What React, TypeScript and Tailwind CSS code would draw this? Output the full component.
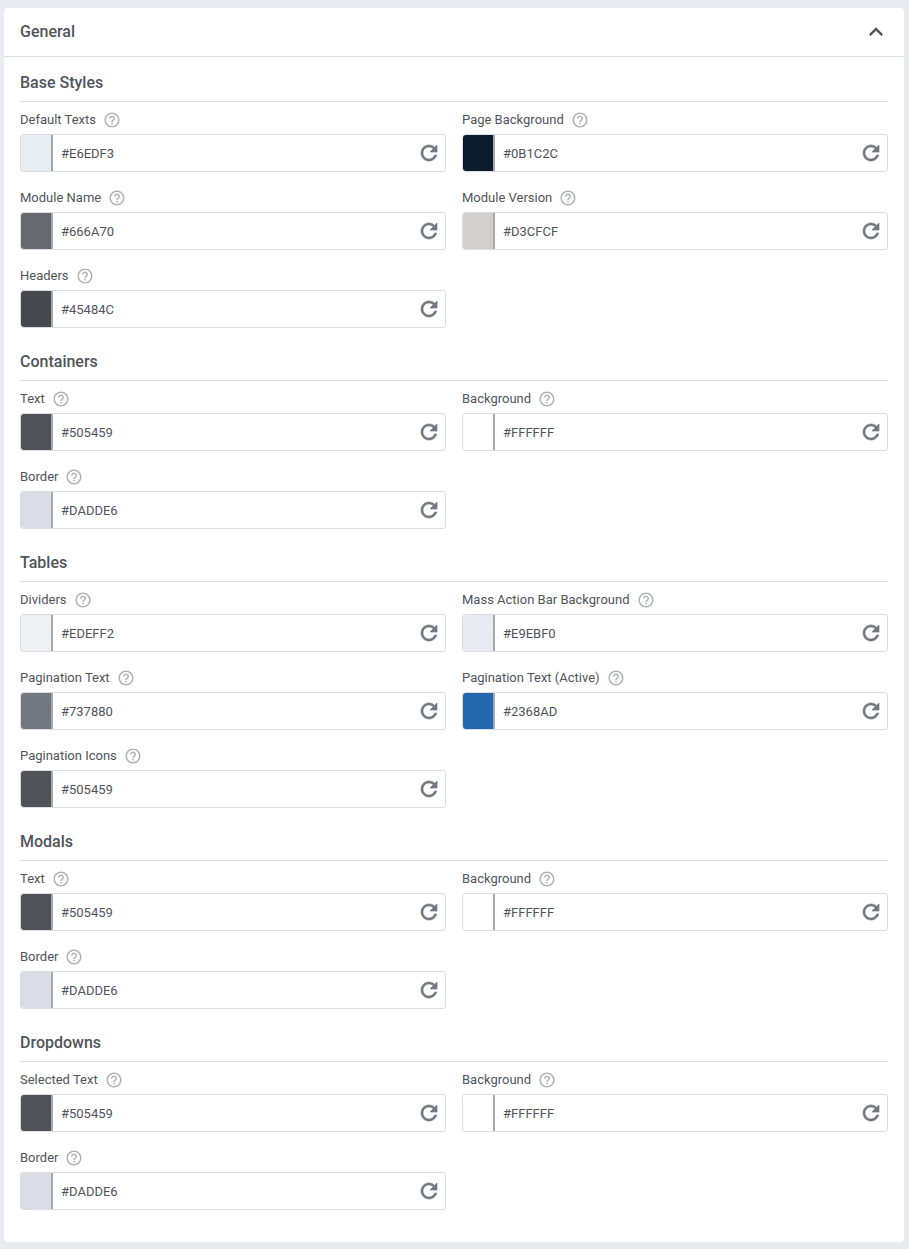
import React from 'react';
import { MdExpandLess, MdHelpOutline } from 'react-icons/md';

type Field = { label: string; color: string };
type Section = { title: string; fields: Field[] };

const sections: Section[] = [
  {
    title: 'Base Styles',
    fields: [
      { label: 'Default Texts', color: '#E6EDF3' },
      { label: 'Page Background', color: '#0B1C2C' },
      { label: 'Module Name', color: '#666A70' },
      { label: 'Module Version', color: '#D3CFCF' },
      { label: 'Headers', color: '#45484C' },
    ],
  },
  {
    title: 'Containers',
    fields: [
      { label: 'Text', color: '#505459' },
      { label: 'Background', color: '#FFFFFF' },
      { label: 'Border', color: '#DADDE6' },
    ],
  },
  {
    title: 'Tables',
    fields: [
      { label: 'Dividers', color: '#EDEFF2' },
      { label: 'Mass Action Bar Background', color: '#E9EBF0' },
      { label: 'Pagination Text', color: '#737880' },
      { label: 'Pagination Text (Active)', color: '#2368AD' },
      { label: 'Pagination Icons', color: '#505459' },
    ],
  },
  {
    title: 'Modals',
    fields: [
      { label: 'Text', color: '#505459' },
      { label: 'Background', color: '#FFFFFF' },
      { label: 'Border', color: '#DADDE6' },
    ],
  },
  {
    title: 'Dropdowns',
    fields: [
      { label: 'Selected Text', color: '#505459' },
      { label: 'Background', color: '#FFFFFF' },
      { label: 'Border', color: '#DADDE6' },
    ],
  },
];

// material refresh glyph, thickened with a stroke to match the heavier reference icon
const RefreshIcon = () => (
  <svg
    width="24"
    height="24"
    viewBox="0 0 24 24"
    fill="currentColor"
    stroke="currentColor"
    strokeWidth="0.7"
    className="mr-[4px] text-[#737880]"
  >
    <path d="M17.65 6.35C16.2 4.9 14.21 4 12 4c-4.42 0-7.99 3.58-7.99 8s3.57 8 7.99 8c3.73 0 6.84-2.55 7.73-6h-2.08c-.82 2.33-3.04 4-5.65 4-3.31 0-6-2.69-6-6s2.69-6 6-6c1.66 0 3.14.69 4.22 1.78L13 11h7V4l-2.35 2.35z" />
  </svg>
);

const ColorField = ({ label, color }: Field) => (
  <div>
    <div className="flex h-[20px] items-center text-[13px] text-[#505459]">
      <span>{label}</span>
      <MdHelpOutline size={18} className="ml-[7px] text-[#b0b2b5]" />
    </div>
    <div className="mt-[4px] flex h-[38px] items-center rounded-[3px] border border-[#dadde6] bg-white">
      <div
        className="h-full w-[32px] rounded-l-[3px] border-r-2 border-[#a8a8a8]"
        style={{ backgroundColor: color }}
      />
      <span className="ml-[8px] flex-1 pt-[2px] text-[13px] text-[#505459]">{color}</span>
      <RefreshIcon />
    </div>
  </div>
);

export default function App() {
  return (
    <div className="min-h-[1249px] bg-[#e9ebf0] pt-[8px] pr-[5px] pb-[7px] pl-[4px] font-['Roboto',sans-serif]">
      <div className="rounded-[4px] bg-white pb-[32px]">
        <div className="flex h-[49px] items-center justify-between border-b border-[#dadde6] pr-[14px] pl-[16px]">
          <h2 className="text-[16px] font-medium text-[#505459]">General</h2>
          <MdExpandLess size={28} className="text-[#505459]" />
        </div>
        <div className="flex flex-col gap-[22px] px-[16px] pt-[14px]">
          {sections.map((section) => (
            <section key={section.title}>
              <h3 className="h-[31px] border-b border-[#dadde6] text-[16px] leading-[24px] font-medium text-[#505459]">
                {section.title}
              </h3>
              <div className="mt-[8px] grid grid-cols-2 gap-x-[16px] gap-y-[16px]">
                {section.fields.map((field) => (
                  <ColorField key={field.label} {...field} />
                ))}
              </div>
            </section>
          ))}
        </div>
      </div>
    </div>
  );
}
